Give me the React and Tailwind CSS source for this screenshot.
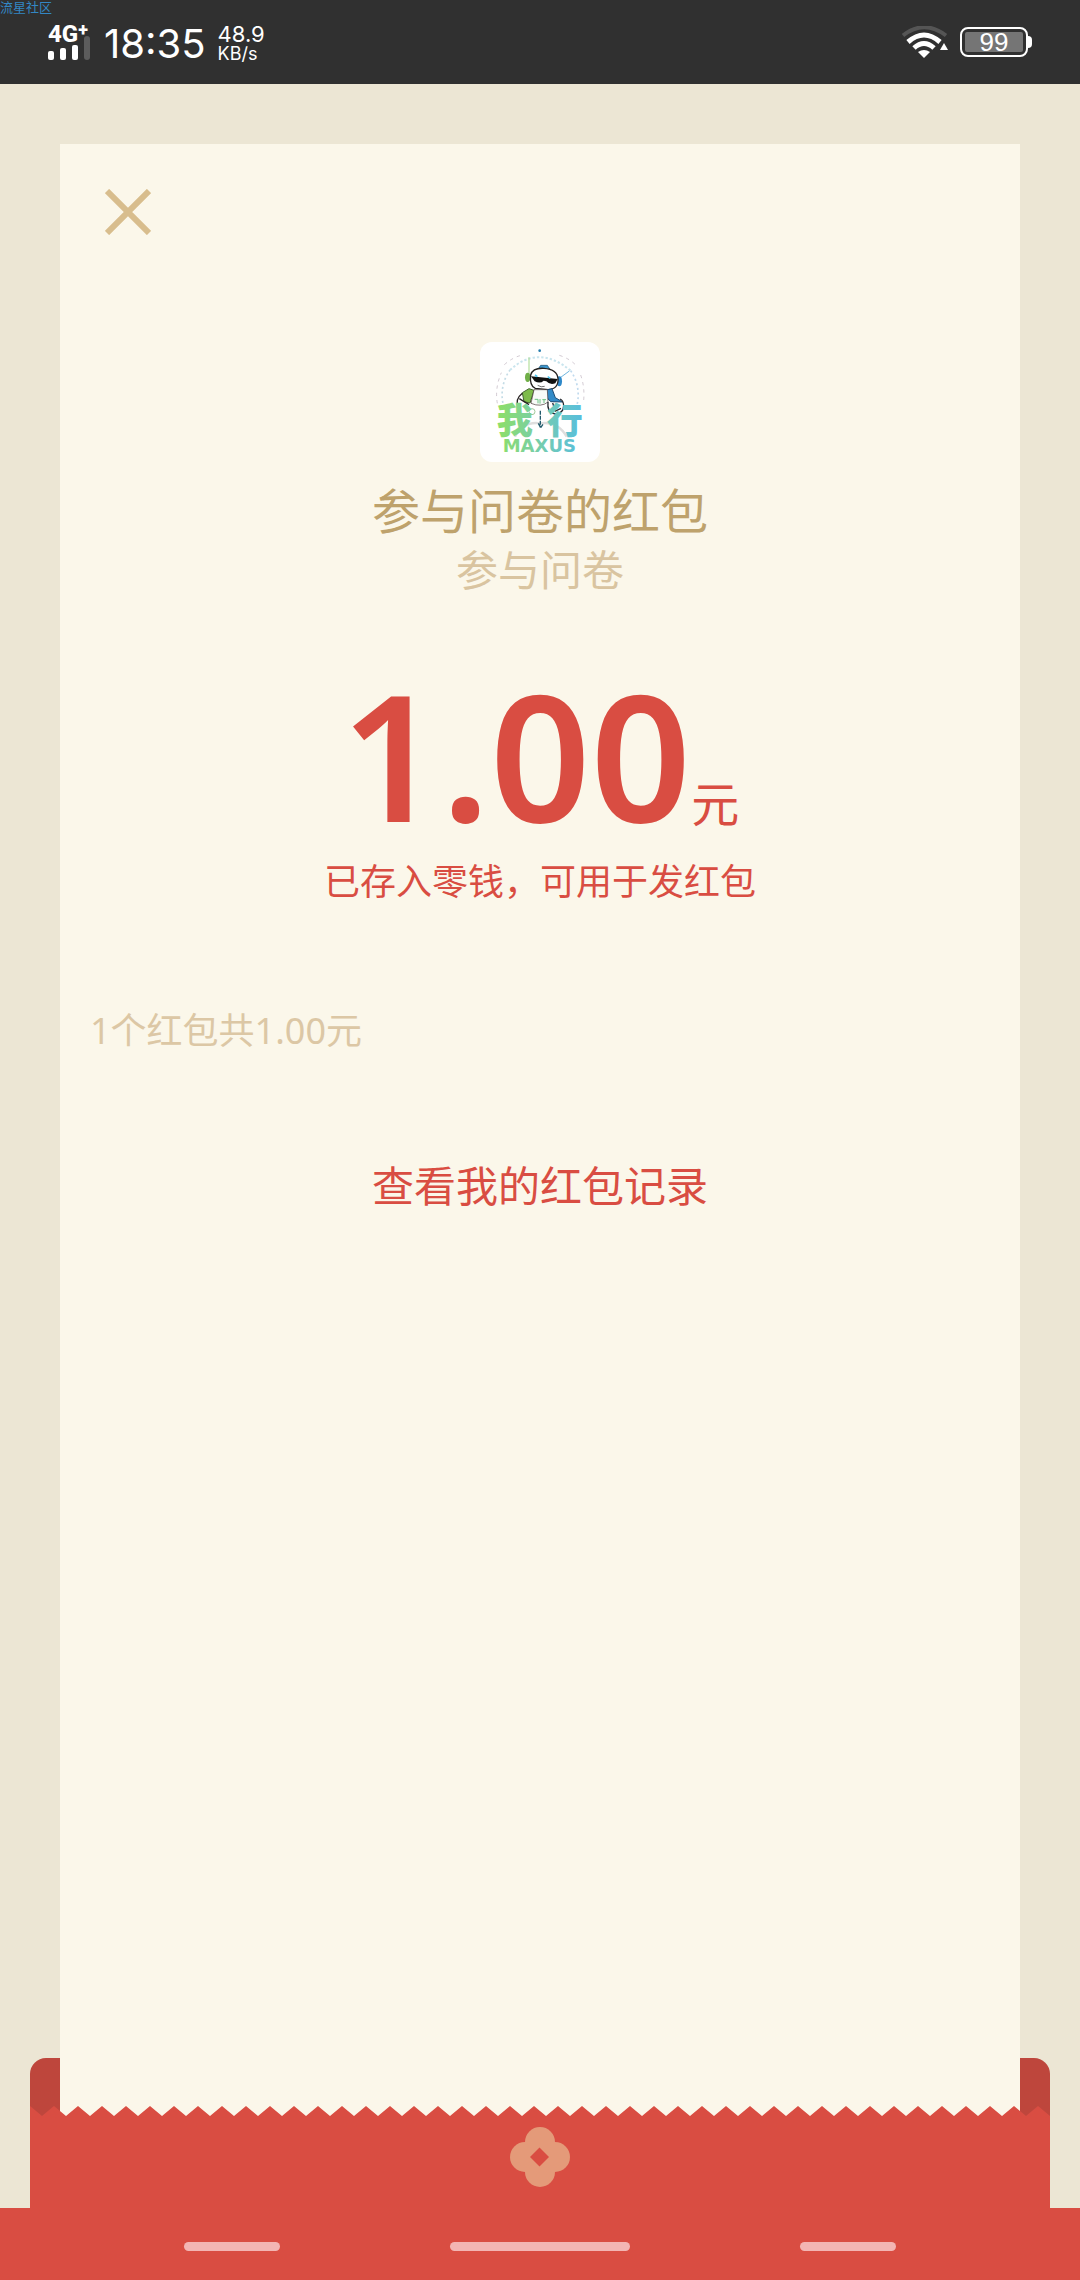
import React from 'react';

const navKeys = [
  { label: '最近任务', width: 'w-24' },
  { label: '主屏幕', width: 'w-[180px]' },
  { label: '返回', width: 'w-24' }
];

function SignalIcon() {
  return (
    <svg className="w-[44px] h-4" viewBox="0 0 44 16" aria-hidden="true">
      <rect x="0" y="7" width="6" height="9" rx="2" fill="#fff" />
      <rect x="12" y="4" width="6" height="12" rx="2" fill="#fff" />
      <rect x="24" y="1" width="6" height="15" rx="2" fill="#fff" />
    </svg>
  );
}

function WifiIcon() {
  return (
    <svg className="w-[46px] h-8" viewBox="0 0 46 32" fill="none" aria-hidden="true">
      <path d="M1 9.500Q22 -7 44 9.500" stroke="#555" strokeWidth="4" />
      <path d="M6 16Q22 2 38 16" stroke="#fff" strokeWidth="5" />
      <path d="M12 22Q22 13 32 22" stroke="#fff" strokeWidth="5" />
      <path d="M16 26Q22 22 28 26L22 32Z" fill="#fff" />
      <path d="M42 17L46 24H38Z" fill="#fff" />
    </svg>
  );
}

function StatusBar() {
  return (
    <header className="relative h-[84px] pt-1 bg-[#303030] text-white flex items-center justify-between px-12">
      <span className="absolute left-0 top-0 text-[13px] leading-[13px] text-[#3387c4] font-['Noto_Sans_CJK_SC',sans-serif]">
        流星社区
      </span>
      <div className="flex items-center">
        <div className="relative w-[44px] h-9 mb-1">
          <div className="flex items-start text-2xl leading-5 font-extrabold font-[Roboto,sans-serif]">
            4G<span className="text-lg leading-3">+</span>
          </div>
          <div className="absolute left-9 top-3 w-1.5 h-6 rounded-sm bg-[#5c5c5c]" />
          <div className="absolute left-0 bottom-0">
            <SignalIcon />
          </div>
        </div>
        <span className="ml-3 text-[40px] leading-10 font-[Inter,sans-serif]">18:35</span>
        <div className="ml-3 flex flex-col font-[Inter,sans-serif]">
          <span className="text-[22px] leading-5">48.9</span>
          <span className="text-[18px] leading-5">KB/s</span>
        </div>
      </div>
      <div className="flex items-center gap-3 mb-1">
        <WifiIcon />
        <div className="flex items-center">
          <div className="w-[68px] h-[30px] p-[3px] rounded-lg border-2 border-white">
            <div className="h-full rounded-xs bg-[#757575] flex items-center justify-center text-[26px] leading-5 font-['Liberation_Sans',sans-serif]">
              99
            </div>
          </div>
          <div className="w-1 h-3 rounded-r-sm bg-white" />
        </div>
      </div>
    </header>
  );
}

function SenderLogo() {
  return (
    <svg className="w-[120px] h-[120px] rounded-xl bg-white" viewBox="60 66 360 360" fill="none" role="img" aria-label="我行 MAXUS">
      <defs>
        <linearGradient id="brand" gradientUnits="userSpaceOnUse" x1="105" y1="0" x2="375" y2="0">
          <stop offset="0" stopColor="#8fe063" />
          <stop offset="0.55" stopColor="#73cbb4" />
          <stop offset="1" stopColor="#55bde0" />
        </linearGradient>
      </defs>

      {/* dotted halo */}
      <path d="M132 262A128 128 0 0 1 150 150" stroke="#c4dce6" strokeWidth="5" strokeDasharray="6 8" />
      <path d="M150 150Q235 72 332 152" stroke="#c9e5ee" strokeWidth="6" strokeDasharray="7 6" />
      <path d="M332 152A128 128 0 0 1 349 262" stroke="#c0daee" strokeWidth="5" strokeDasharray="6 8" />
      <path d="M112 250Q104 205 124 158M133 134Q158 112 184 106M298 106Q330 116 350 138M362 165Q376 205 370 250" stroke="#bdb0bc" strokeWidth="2" strokeDasharray="10 12" />
      <circle cx="239" cy="92" r="4" fill="#267dae" />

      {/* robot */}
      <path d="M207 112V164" stroke="#a5d989" strokeWidth="3" />
      <path d="M298 175L328 153" stroke="#6fb6df" strokeWidth="3" />
      <path d="M236 145L242 136H262L270 148Z" fill="#3c96ce" stroke="#174b70" strokeWidth="2" />
      <ellipse cx="203" cy="172" rx="8" ry="14" fill="#70af48" />
      <ellipse cx="298" cy="184" rx="8" ry="15" fill="#2e88c9" />
      <path d="M212 165Q218 143 252 145Q292 148 294 176Q296 207 264 209L226 205Q208 198 212 165Z" fill="#fff" stroke="#24211f" strokeWidth="4" />
      <path d="M213 169L293 177L286 190Q270 196 259 184L251 182Q241 192 224 184Z" fill="#111" />
      <path d="M225 165l7 5M263 170l8 5" stroke="#4fc6ef" strokeWidth="5" />
      <path d="M233 196Q244 203 254 199" stroke="#2b2b2b" strokeWidth="2" />
      <path d="M187 218L207 206L222 211L210 249L192 245Z" fill="#7dbb4b" stroke="#41652d" strokeWidth="3" />
      <path d="M259 210L276 206L286 233L308 246L272 245L260 232Z" fill="#338bc8" stroke="#1c4b73" strokeWidth="3" />
      <path d="M222 209H262L264 246Q243 263 213 250Z" fill="#f8fbf8" stroke="#433" strokeWidth="2" />
      <path d="M224 238h10v12M240 237v14M247 239h11M252 239v10" stroke="#6dc282" strokeWidth="3" />
      <path d="M187 220Q164 238 175 263M178 236L207 254" stroke="#282323" strokeWidth="4" />
      <path d="M264 246Q260 278 285 282Q310 281 311 257Q310 241 300 237M278 249L286 273L303 265" stroke="#24272d" strokeWidth="4" />
      <circle cx="216" cy="275" r="9" stroke="#a0c99b" strokeWidth="3" />
      <path d="M165 350Q189 303 241 310Q293 303 320 350" stroke="#dedede" strokeWidth="7" />

      <g fill="url(#brand)" fontFamily="Noto Sans CJK SC, sans-serif" fontWeight="900" fontSize="108">
        <text x="110" y="341">我</text>
        <text x="260" y="341">行</text>
      </g>
      <path d="M241 272V323M235 310L242 323L250 311" stroke="#235b6c" strokeWidth="4" strokeDasharray="12 3" />
      <text x="238" y="397" textAnchor="middle" fill="url(#brand)" fontFamily="DejaVu Sans, sans-serif" fontWeight="700" fontSize="54">
        MAXUS
      </text>
    </svg>
  );
}

function ZigzagEdge() {
  return (
    <svg className="block w-full h-2.5 -mt-2.5" aria-hidden="true">
      <defs>
        <pattern id="teeth" width="24" height="10" patternUnits="userSpaceOnUse">
          <path d="M0 0L12 10L24 0V10H0Z" fill="#d94d42" />
        </pattern>
      </defs>
      <rect width="100%" height="10" fill="url(#teeth)" />
    </svg>
  );
}

function FlowerIcon() {
  return (
    <svg className="w-[60px] h-[60px]" viewBox="0 0 60 60" aria-hidden="true">
      <g fill="#e49a79">
        <circle cx="30" cy="15" r="15" />
        <circle cx="45" cy="30" r="15" />
        <circle cx="30" cy="45" r="15" />
        <circle cx="15" cy="30" r="15" />
        <rect x="15" y="15" width="30" height="30" />
      </g>
      <path d="M29.500 20.500L39 30L29.500 39.500L20 30Z" fill="#d94d42" />
    </svg>
  );
}

export default function App() {
  return (
    <div className="min-h-screen flex flex-col bg-[#ece6d4] font-['Noto_Sans_CJK_SC',sans-serif]">
      <StatusBar />

      <main className="flex-1 flex flex-col mx-[60px] mt-[60px] bg-[#fbf7ea]">
        <div className="px-[45px] pt-[45px] flex">
          <button type="button" aria-label="关闭" className="w-[46px] h-[46px] cursor-pointer">
            <svg className="w-full h-full" viewBox="0 0 46 46" stroke="#d8bd8d" strokeWidth="6">
              <path d="M2 2L44 44M44 2L2 44" />
            </svg>
          </button>
        </div>

        <section className="mt-[107px] flex flex-col items-center">
          <SenderLogo />
          <h1 className="mt-4 text-5xl leading-[60px] text-[#bea26c]">参与问卷的红包</h1>
          <p className="text-[42px] leading-[60px] text-[#d9c4a0]">参与问卷</p>

          <div className="mt-[66px] flex items-baseline text-[#d94d42]">
            <span className="text-[176px] leading-[180px] font-semibold font-['Noto_Sans',sans-serif]">1.00</span>
            <span className="text-5xl leading-[60px]">元</span>
          </div>
          <p className="mt-2 text-4xl leading-[54px] text-[#d94d42]">已存入零钱，可用于发红包</p>
        </section>

        <p className="mt-[98px] px-[30px] text-4xl leading-[54px] text-[#dcc7a5] font-['Noto_Sans','Noto_Sans_CJK_SC',sans-serif]">
          1个红包共1.00元
        </p>

        <a href="#records" className="mt-24 self-center text-[42px] leading-[60px] text-[#d94d42]">
          查看我的红包记录
        </a>
      </main>

      <footer>
        {/* envelope pocket behind and below the card */}
        <div className="px-[30px]">
          <div className="h-[58px] flex">
            <div className="w-[30px] rounded-tl-2xl bg-[#be463c]" />
            <div className="flex-1 bg-[#fbf7ea]" />
            <div className="w-[30px] rounded-tr-2xl bg-[#be463c]" />
          </div>
          <ZigzagEdge />
          <div className="h-[92px] pt-[11px] flex justify-center bg-[#d94d42]">
            <FlowerIcon />
          </div>
        </div>
        <nav className="h-[72px] pt-1 px-[17%] flex items-center justify-between bg-[#d94d42]">
          {navKeys.map((key) => (
            <button
              key={key.label}
              type="button"
              aria-label={key.label}
              className={`${key.width} h-[9px] rounded-full bg-[#f3b5b3] cursor-pointer`}
            />
          ))}
        </nav>
      </footer>
    </div>
  );
}
